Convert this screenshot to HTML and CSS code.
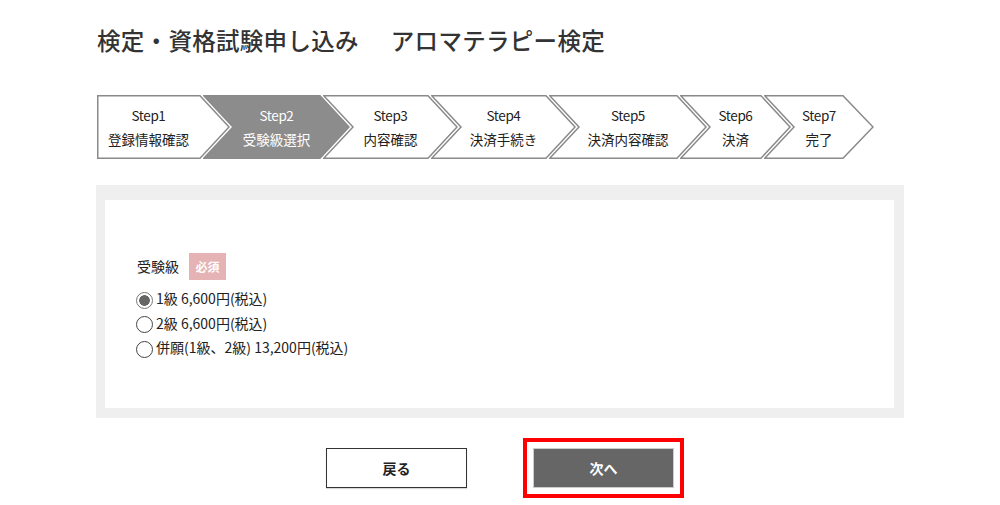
FILE: index.html
```html
<!DOCTYPE html>
<html lang="ja">
<head>
<meta charset="utf-8">
<title>検定・資格試験申し込み</title>
<link rel="stylesheet" href="styles.css">
</head>
<body>
<div class="page">
  <h1 class="title">検定・資格試験申し込み<span class="title-gap"></span>アロマテラピー検定</h1>

  <ol class="steps">
    <li class="step step-first" style="width:133px">
      <svg class="step-bg" width="133" height="64"><polygon points="0.75,0.75 103,0.75 132,32 103,63.25 0.75,63.25"/></svg>
      <span class="step-label">Step1</span><span class="step-name">登録情報確認</span>
    </li>
    <li class="step step-current" style="width:147px">
      <svg class="step-bg" width="147" height="64"><polygon points="0.75,0.75 117,0.75 146,32 117,63.25 0.75,63.25 30,32"/></svg>
      <span class="step-label">Step2</span><span class="step-name">受験級選択</span>
    </li>
    <li class="step" style="width:135px">
      <svg class="step-bg" width="135" height="64"><polygon points="0.75,0.75 105,0.75 134,32 105,63.25 0.75,63.25 30,32"/></svg>
      <span class="step-label">Step3</span><span class="step-name">内容確認</span>
    </li>
    <li class="step" style="width:145px">
      <svg class="step-bg" width="145" height="64"><polygon points="0.75,0.75 115,0.75 144,32 115,63.25 0.75,63.25 30,32"/></svg>
      <span class="step-label">Step4</span><span class="step-name">決済手続き</span>
    </li>
    <li class="step" style="width:158px">
      <svg class="step-bg" width="158" height="64"><polygon points="0.75,0.75 128,0.75 157,32 128,63.25 0.75,63.25 30,32"/></svg>
      <span class="step-label">Step5</span><span class="step-name">決済内容確認</span>
    </li>
    <li class="step" style="width:111px">
      <svg class="step-bg" width="111" height="64"><polygon points="0.75,0.75 81,0.75 110,32 81,63.25 0.75,63.25 30,32"/></svg>
      <span class="step-label">Step6</span><span class="step-name">決済</span>
    </li>
    <li class="step" style="width:110px">
      <svg class="step-bg" width="110" height="64"><polygon points="0.75,0.75 79,0.75 109,32 79,63.25 0.75,63.25 30,32"/></svg>
      <span class="step-label">Step7</span><span class="step-name">完了</span>
    </li>
  </ol>

  <form class="panel">
    <div class="panel-inner">
      <div class="field-head">
        <span class="field-label">受験級</span>
        <span class="badge">必須</span>
      </div>
      <label class="option"><input type="radio" name="grade" checked><span>1級 6,600円(税込)</span></label>
      <label class="option"><input type="radio" name="grade"><span>2級 6,600円(税込)</span></label>
      <label class="option"><input type="radio" name="grade"><span>併願(1級、2級) 13,200円(税込)</span></label>
    </div>
  </form>

  <div class="actions">
    <button type="button" class="btn btn-back">戻る</button>
    <div class="highlight"><button type="button" class="btn btn-next">次へ</button></div>
  </div>
</div>
</body>
</html>
```

FILE: styles.css
```css
* { box-sizing: border-box; }

html, body {
  min-height: 505px;
}

body {
  margin: 0;
  background: #fff;
  color: #222;
  font-family: "Noto Sans CJK JP", "Liberation Sans", sans-serif;
}

.page {
  width: 808px;
  margin-left: 96px;
  padding-bottom: 14px;
}

.title {
  margin: 0;
  padding-top: 22px;
  padding-left: 1px;
  font-size: 23.5px;
  line-height: 36px;
  font-weight: 500;
  color: #333;
  letter-spacing: 0.3px;
}

.title-gap {
  display: inline-block;
  width: 32px;
}

.steps {
  list-style: none;
  margin: 37px 0 0 1px;
  padding: 0;
  display: flex;
  height: 64px;
}

.step {
  position: relative;
  height: 64px;
  margin-right: -27px;
  padding: 8px 30px 0 30px;
  display: flex;
  flex-direction: column;
  align-items: center;
  font-size: 13.5px;
  line-height: 24px;
  color: #222;
}

.step-first {
  padding-left: 0;
}

.step-bg {
  position: absolute;
  left: 0;
  top: 0;
}

.step-bg polygon {
  fill: #fff;
  stroke: #8a8a8a;
  stroke-width: 1.5;
}

.step-current .step-bg polygon {
  fill: #8c8c8c;
}

.step-current {
  color: #fff;
}

.step-label,
.step-name {
  position: relative;
  white-space: nowrap;
}

.step-label {
  letter-spacing: -0.4px;
}

.panel {
  margin-top: 26px;
  background: #efefef;
  padding: 15px 10px 10px 9px;
}

.panel-inner {
  background: #fff;
  height: 208px;
  padding: 53px 32px 0 31px;
}

.field-head {
  display: flex;
  align-items: center;
  height: 27px;
  margin-bottom: 6px;
}

.field-label {
  font-size: 14px;
  line-height: 27px;
  padding-left: 1px;
}

.badge {
  margin-left: 10px;
  width: 37px;
  height: 27px;
  background: #e5b3b3;
  color: #fff;
  font-size: 12px;
  font-weight: 700;
  line-height: 27px;
  text-align: center;
}

.option {
  display: flex;
  align-items: center;
  height: 24.5px;
  font-size: 14px;
  color: #222;
}

.option input {
  appearance: none;
  -webkit-appearance: none;
  margin: 4px 3px 0 0;
  width: 17px;
  height: 17px;
  border: 1px solid #444;
  border-radius: 50%;
  background: #fff;
  flex: none;
}

.option input:checked {
  border: 1.5px solid #777;
  background: radial-gradient(circle, #666 0 5px, #fff 5.6px);
}

.actions {
  display: flex;
  justify-content: center;
  gap: 66px;
  margin-top: 30px;
}

.highlight {
  margin: -10px;
  padding: 6px;
  border: 4px solid #ff0000;
}

.btn {
  display: block;
  width: 141px;
  height: 40px;
  font-family: "Noto Sans CJK JP", "Liberation Sans", sans-serif;
  font-size: 14px;
  font-weight: 700;
  cursor: pointer;
}

.btn-back {
  background: #fff;
  color: #222;
  border: 1px solid #333;
  box-shadow: 0 1px 1px rgba(0,0,0,0.15);
}

.btn-next {
  background: #666;
  color: #fff;
  border: 1px solid #ccc;
}
```
